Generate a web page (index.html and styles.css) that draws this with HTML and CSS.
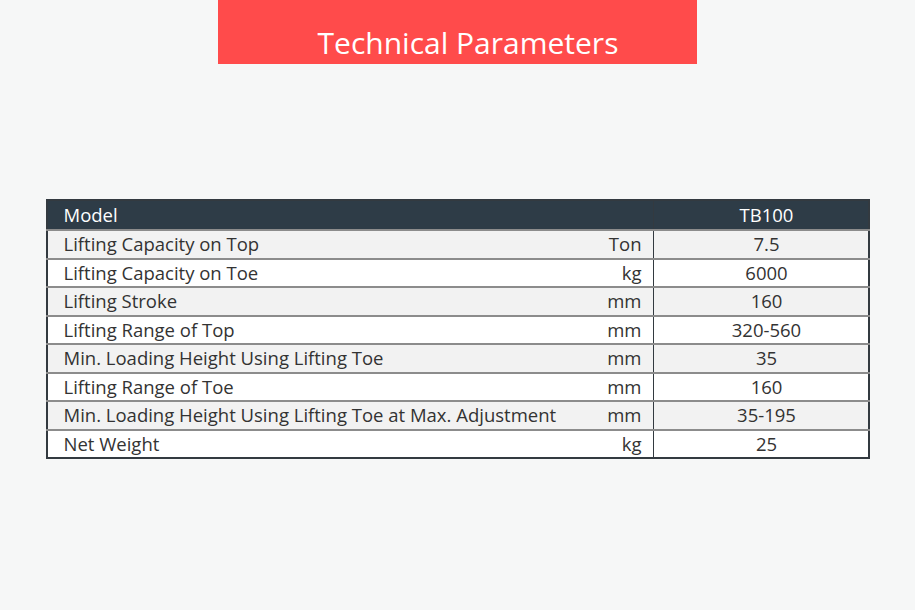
FILE: index.html
```html
<!DOCTYPE html>
<html lang="en">
<head>
<meta charset="utf-8">
<title>Technical Parameters</title>
<link rel="stylesheet" href="styles.css">
</head>
<body>
<div class="page">
  <div class="banner"><h1 class="title">Technical Parameters</h1></div>
  <table class="params">
    <thead>
      <tr><th class="name" colspan="2">Model</th><th class="val">TB100</th></tr>
    </thead>
    <tbody>
      <tr><td class="name">Lifting Capacity on Top</td><td class="unit">Ton</td><td class="val">7.5</td></tr>
      <tr><td class="name">Lifting Capacity on Toe</td><td class="unit">kg</td><td class="val">6000</td></tr>
      <tr><td class="name">Lifting Stroke</td><td class="unit">mm</td><td class="val">160</td></tr>
      <tr><td class="name">Lifting Range of Top</td><td class="unit">mm</td><td class="val">320-560</td></tr>
      <tr><td class="name">Min. Loading Height Using Lifting Toe</td><td class="unit">mm</td><td class="val">35</td></tr>
      <tr><td class="name">Lifting Range of Toe</td><td class="unit">mm</td><td class="val">160</td></tr>
      <tr><td class="name">Min. Loading Height Using Lifting Toe at Max. Adjustment</td><td class="unit">mm</td><td class="val">35-195</td></tr>
      <tr><td class="name">Net Weight</td><td class="unit">kg</td><td class="val">25</td></tr>
    </tbody>
  </table>
</div>
</body>
</html>
```

FILE: styles.css
```css
html, body {
  margin: 0;
  padding: 0;
  background: #f6f7f7;
}
body {
  font-family: "Open Sans", "Lato", sans-serif;
  color: #333;
  width: 915px;
  height: 610px;
  overflow: hidden;
}
.page {
  display: flex;
  flex-direction: column;
  align-items: center;
}
.banner {
  width: 479px;
  height: 64px;
  background: #ff4b4b;
  display: flex;
  align-items: flex-end;
  justify-content: center;
}
.title {
  margin: 0 0 1px 21px;
  font-weight: 400;
  font-size: 30px;
  line-height: 40px;
  color: #fff;
}
.params {
  margin-top: 135px;
  width: 824px;
  border-collapse: collapse;
  border: 2px solid #333a40;
  font-size: 18.5px;
}
.params th, .params td {
  height: 26.5px;
  padding: 0;
  line-height: 26px;
  font-weight: 400;
  border-top: 2px solid #8c8c8c;
}
.params thead th {
  background: #2e3c47;
  color: #fff;
  border-top: none;
  height: 28px;
}
.params .name {
  text-align: left;
  padding-left: 16px;
}
.params .unit {
  text-align: right;
  padding-right: 11px;
  width: 60px;
}
.params .val {
  text-align: center;
  width: 202px;
  padding-left: 12px;
  border-left: 1px solid #333a40;
}
.params tbody tr:nth-child(odd) td {
  background: #f2f2f2;
}
.params tbody tr:nth-child(even) td {
  background: #fff;
}
```
